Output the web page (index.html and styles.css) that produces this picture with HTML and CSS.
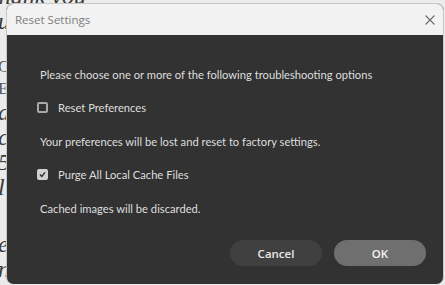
FILE: index.html
```html
<!DOCTYPE html>
<html lang="en">
<head>
    <meta charset="UTF-8">
    <meta name="viewport" content="width=device-width, initial-scale=1.0">
    <title>Reset Settings</title>
    <link rel="stylesheet" href="styles.css">
</head>
<body>
    <!-- Document behind the dialog -->
    <div class="doc">
        <p class="doc-head">thank you</p>
        <p>u</p>
        <p class="gap-s"></p>
        <p class="caps">G</p>
        <p class="caps">E</p>
        <p>d</p>
        <p>c</p>
        <p>5</p>
        <p>l</p>
        <p class="gap-l"></p>
        <p>e</p>
        <p>n</p>
    </div>

    <div class="dialog">
        <div class="titlebar">
            <span class="title">Reset Settings</span>
            <svg class="close" width="10" height="10" viewBox="0 0 10 10">
                <path d="M0.5 0.5 L9.5 9.5 M9.5 0.5 L0.5 9.5" stroke="#6b6b6b" stroke-width="1.1" fill="none"/>
            </svg>
        </div>
        <div class="body">
            <p class="line">Please choose one or more of the following troubleshooting options</p>
            <label class="option">
                <span class="box"></span>
                Reset Preferences
            </label>
            <p class="line desc">Your preferences will be lost and reset to factory settings.</p>
            <label class="option">
                <span class="box checked">
                    <svg width="9" height="9" viewBox="0 0 9 9">
                        <path d="M1.2 4.6 L3.6 7 L7.8 1.8" stroke="#2b2b2b" stroke-width="1.7" fill="none"/>
                    </svg>
                </span>
                Purge All Local Cache Files
            </label>
            <p class="line desc">Cached images will be discarded.</p>
            <div class="buttons">
                <button class="btn">Cancel</button>
                <button class="btn primary">OK</button>
            </div>
        </div>
    </div>
</body>
</html>
```

FILE: styles.css
```css
* {
    margin: 0;
    padding: 0;
    box-sizing: border-box;
}

body {
    width: 445px;
    height: 285px;
    overflow: hidden;
    background-color: #ebebeb;
    position: relative;
    font-family: 'Lato', 'Open Sans', sans-serif;
}

/* Background document */
.doc {
    font-family: 'Liberation Serif', serif;
    font-style: italic;
    font-size: 24px;
    line-height: 25px;
    color: #3a3a3a;
    margin-top: -16px;
    margin-left: -2px;
}

.doc p {
    height: 25px;
}

.doc .doc-head {
    margin-left: -6px;
}

.doc .gap-s {
    height: 22px;
}

.doc .gap-l {
    height: 32px;
}

.doc .caps {
    height: 22px;
    font-style: normal;
    font-size: 17px;
    line-height: 22px;
    color: #555;
}

/* Dialog */
.dialog {
    position: absolute;
    left: 6px;
    top: 3px;
    width: 438px;
    height: 281px;
    border-radius: 7px;
    overflow: hidden;
    background-color: #323232;
    border: 1px solid #c8c8c8;
    border-bottom: none;
    display: flex;
    flex-direction: column;
}

.titlebar {
    height: 31px;
    background-color: #f2f2f2;
    display: flex;
    align-items: center;
    justify-content: space-between;
    padding: 0 8px;
}

.title {
    font-family: 'Open Sans', sans-serif;
    font-size: 11.5px;
    color: #7b7b7b;
}

.body {
    flex: 1;
    display: flex;
    flex-direction: column;
    padding: 32px 17px 0 30px;
    color: #dedede;
    font-size: 11.2px;
}

.line {
    height: 16px;
    line-height: 16px;
    margin-left: 3px;
    white-space: nowrap;
}

.option {
    height: 16px;
    display: flex;
    align-items: center;
    gap: 10px;
    margin-top: 16px;
    white-space: nowrap;
}

.desc {
    margin-top: 19px;
}

.box {
    width: 11px;
    height: 11px;
    border: 2px solid #a8a8a8;
    border-radius: 2px;
    display: flex;
    align-items: center;
    justify-content: center;
}

.box.checked {
    background-color: #d2d2d2;
    border-color: #d2d2d2;
}

.buttons {
    display: flex;
    justify-content: flex-end;
    gap: 12px;
    margin-top: 23px;
}

.btn {
    width: 92px;
    height: 26px;
    border: none;
    border-radius: 13px;
    background-color: #404040;
    color: #e8e8e8;
    font-family: 'Open Sans', sans-serif;
    font-size: 11.5px;
    font-weight: 600;
}

.btn.primary {
    background-color: #6f6f6f;
    color: #f2f2f2;
}
```
